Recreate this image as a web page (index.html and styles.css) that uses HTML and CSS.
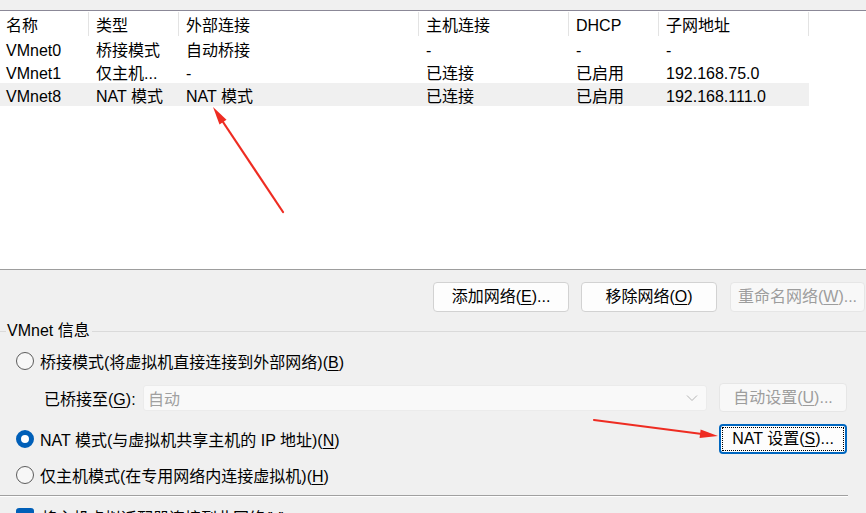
FILE: index.html
```html
<!DOCTYPE html>
<html lang="zh-CN">
<head>
<meta charset="utf-8">
<title>虚拟网络编辑器</title>
<link rel="stylesheet" href="styles.css">
</head>
<body>
<div class="page">
  <div class="topgap"></div>
  <div class="list">
    <div class="row head">
      <div class="c c1">名称</div>
      <div class="c c2">类型</div>
      <div class="c c3">外部连接</div>
      <div class="c c4">主机连接</div>
      <div class="c c5">DHCP</div>
      <div class="c c6">子网地址</div>
      <div class="c c7"></div>
    </div>
    <div class="row">
      <div class="c c1">VMnet0</div>
      <div class="c c2">桥接模式</div>
      <div class="c c3">自动桥接</div>
      <div class="c c4">-</div>
      <div class="c c5">-</div>
      <div class="c c6">-</div>
    </div>
    <div class="row">
      <div class="c c1">VMnet1</div>
      <div class="c c2">仅主机...</div>
      <div class="c c3">-</div>
      <div class="c c4">已连接</div>
      <div class="c c5">已启用</div>
      <div class="c c6">192.168.75.0</div>
    </div>
    <div class="row sel">
      <div class="c c1">VMnet8</div>
      <div class="c c2">NAT 模式</div>
      <div class="c c3">NAT 模式</div>
      <div class="c c4">已连接</div>
      <div class="c c5">已启用</div>
      <div class="c c6">192.168.111.0</div>
    </div>
  </div>

  <div class="btnrow">
    <button class="btn wide">添加网络(<u>E</u>)...</button>
    <button class="btn wide">移除网络(<u>O</u>)</button>
    <button class="btn wide dis">重命名网络(<u>W</u>)...</button>
  </div>

  <div class="grouptitle">
    <span class="gline short"></span>
    <span class="glabel">VMnet 信息</span>
    <span class="gline"></span>
  </div>

  <div class="radiorow r1">
    <span class="radio"></span>
    <span>桥接模式(将虚拟机直接连接到外部网络)(<u>B</u>)</span>
  </div>

  <div class="bridgerow">
    <span class="blabel">已桥接至(<u>G</u>):</span>
    <div class="select">
      <span>自动</span>
      <svg class="chev" width="12" height="8" viewBox="0 0 12 8"><path d="M1 1.5 L6 6.5 L11 1.5" fill="none" stroke="#b4b4b4" stroke-width="1"/></svg>
    </div>
    <button class="btn side dis">自动设置(<u>U</u>)...</button>
  </div>

  <div class="natrow">
    <div class="radiorow">
      <span class="radio on"></span>
      <span>NAT 模式(与虚拟机共享主机的 IP 地址)(<u>N</u>)</span>
    </div>
    <button class="btn side focus"><span class="dots">NAT 设置(<u>S</u>)...</span></button>
  </div>

  <div class="radiorow r3">
    <span class="radio"></span>
    <span>仅主机模式(在专用网络内连接虚拟机)(<u>H</u>)</span>
  </div>

  <div class="sep"></div>

  <div class="checkrow">
    <span class="check"></span>
    <span>将主机虚拟适配器连接到此网络(<u>V</u>)</span>
  </div>

  <svg class="annot" width="866" height="513" viewBox="0 0 866 513">
    <line x1="283" y1="212" x2="221" y2="119" stroke="#ee2c22" stroke-width="2.2" stroke-linecap="round"/>
    <polygon points="213,107 226.5,119.8 219.5,124.4" fill="#ee2c22"/>
    <line x1="594" y1="420" x2="702" y2="434" stroke="#ee2c22" stroke-width="2.2" stroke-linecap="round"/>
    <polygon points="718,436 700.6,429.4 699.6,438" fill="#ee2c22"/>
  </svg>
</div>
</body>
</html>
```
FILE: styles.css
```css
* { box-sizing: border-box; }
html, body { margin: 0; padding: 0; }
body {
  background: #f0f0f0;
  font-family: "Liberation Sans", "Noto Sans CJK SC", sans-serif;
  font-size: 16px;
  color: #000;
  width: 866px;
  height: 513px;
  overflow: hidden;
}
.page {
  position: relative;
  width: 866px;
  height: 513px;
  overflow: hidden;
  display: flex;
  flex-direction: column;
}
u { text-decoration: underline; text-underline-offset: 2px; }

.topgap { height: 10px; flex: none; }
.list {
  flex: none;
  height: 260px;
  background: #fff;
  border-top: 1px solid #8b8897;
  border-bottom: 1px solid #9d9d9d;
}
.row {
  display: flex;
  height: 23px;
  width: 809px;
}
.row.head { height: 26px; width: 866px; }
.row.sel { background: #f0f0f0; }
.c {
  padding-left: 6px;
  padding-top: 2px;
  height: 23px;
  line-height: 23px;
  white-space: nowrap;
  overflow: hidden;
  flex: none;
  position: relative;
}
.head .c { height: 26px; line-height: 26px; }
.c1 { width: 89px; }
.c2 { width: 90px; padding-left: 7px; }
.c3 { width: 240px; padding-left: 7px; }
.c4 { width: 150px; padding-left: 7px; }
.c5 { width: 90px; padding-left: 7px; }
.c6 { width: 150px; padding-left: 7px; }
.c7 { flex: 1; }
.head .c::after {
  content: "";
  position: absolute;
  right: 0;
  top: 1px;
  bottom: 1px;
  width: 1px;
  background: #e3e3e3;
}
.head .c7::after { display: none; }

.btnrow {
  flex: none;
  display: flex;
  justify-content: flex-end;
  gap: 12px;
  margin-top: 12px;
  margin-right: 1px;
}
.btn {
  font: inherit;
  font-size: 16px;
  color: #000;
  background: #fdfdfd;
  border: 1px solid #d2d2d2;
  border-radius: 4px;
  height: 30px;
  padding: 0;
  line-height: 26px;
  white-space: nowrap;
}
.btn.wide { width: 136px; }
.btn.side { width: 128px; }
.btn.dis { color: #9d9d9d; background: #f8f8f8; border-color: #e6e6e6; }
.btnrow .btn.dis { margin-left: 1px; width: 135px; }
.btn.focus {
  border: 2px solid #0067c0;
  padding: 1px;
  display: flex;
}
.btn.focus .dots {
  flex: 1;
  border: 1px dotted #000;
  line-height: 22px;
}

.grouptitle {
  flex: none;
  display: flex;
  align-items: center;
  height: 20px;
  margin-top: 9px;
}
.gline { flex: 1; height: 1px; background: #dadada; }
.gline.short { flex: none; width: 6px; }
.glabel { padding: 0 2px 0 1px; line-height: 20px; }

.radiorow {
  flex: none;
  display: flex;
  align-items: center;
  height: 24px;
  padding-left: 16px;
  gap: 6px;
  white-space: nowrap;
}
.r1 { margin-top: 8px; }
.radio {
  width: 18px;
  height: 18px;
  border-radius: 50%;
  border: 1px solid #5c5c5c;
  background: #f7f7f7;
  flex: none;
}
.radio.on {
  border: 5px solid #005fb8;
  background: #fff;
}

.bridgerow {
  flex: none;
  display: flex;
  align-items: center;
  height: 29px;
  margin-top: 10px;
  padding-left: 44px;
  padding-right: 19px;
}
.blabel { width: 99px; flex: none; white-space: nowrap; }
.select {
  flex: 1;
  height: 26px;
  background: #f9f9f9;
  border: 1px solid #ebebeb;
  border-radius: 3px;
  margin-right: 12px;
  display: flex;
  align-items: center;
  justify-content: space-between;
  padding: 0 8px 0 4px;
  color: #a0a0a0;
}
.bridgerow .btn.side { height: 29px; }

.natrow {
  flex: none;
  display: flex;
  align-items: center;
  justify-content: space-between;
  height: 30px;
  margin-top: 12px;
  padding-right: 19px;
}

.r3 { margin-top: 9px; }

.sep {
  flex: none;
  width: 848px;
  height: 2px;
  margin-top: 8px;
  border-top: 1px solid #a0a0a0;
  border-bottom: 1px solid #fff;
}

.checkrow {
  flex: none;
  display: flex;
  align-items: center;
  height: 24px;
  margin-top: 8px;
  padding-left: 16px;
  gap: 7px;
  white-space: nowrap;
}
.check {
  width: 18px;
  height: 18px;
  border-radius: 3px;
  background: #005fb8;
  flex: none;
}

.annot {
  position: absolute;
  left: 0;
  top: 0;
  pointer-events: none;
}
```
